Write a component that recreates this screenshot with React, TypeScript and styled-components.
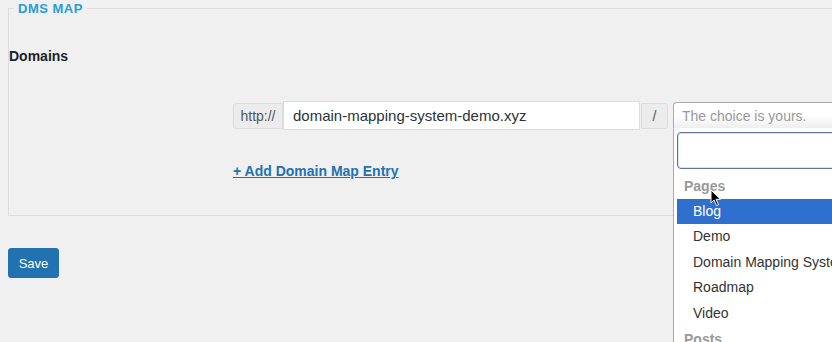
import styled, { createGlobalStyle } from "styled-components";

const GlobalStyle = createGlobalStyle`
  html {
    overflow: hidden;
    background: #f0f0f1;
  }
  body {
    margin: 0;
    padding: 0;
    min-height: 342px;
    font-family: "Liberation Sans", Arial, sans-serif;
    font-size: 14px;
    color: #1d2327;
  }
`;

const Page = styled.div`
  padding: 0 0 0 8px;
  width: 1100px;
`;

const Fieldset = styled.fieldset`
  margin: 0;
  padding: 0 0 34px 0;
  border: 1px solid #dcdcde;
  min-width: 0;
`;

const Legend = styled.legend`
  margin-left: 5px;
  padding: 0 4px;
  font-size: 13px;
  line-height: 17px;
  font-weight: 700;
  letter-spacing: 0.5px;
  color: #2a9bd6;
`;

const Heading = styled.h3`
  margin: 29px 0 0;
  font-size: 14px;
  line-height: 20px;
  font-weight: 700;
  color: #1d2327;
`;

const Entries = styled.div`
  margin: 35px 0 0 224px;
  display: flex;
  flex-direction: column;
`;

const EntryRow = styled.div`
  display: flex;
  align-items: center;
  height: 29px;
`;

const Addon = styled.span<{ $side: "left" | "right" }>`
  display: flex;
  align-items: center;
  justify-content: center;
  box-sizing: border-box;
  height: 26px;
  padding: 0 ${(p) => (p.$side === "left" ? "6px" : "0")};
  width: ${(p) => (p.$side === "left" ? "50px" : "27px")};
  background: #ececec;
  border: 1px solid #dcdcde;
  border-radius: ${(p) => (p.$side === "left" ? "3px 0 0 3px" : "0 3px 3px 0")};
  color: #50575e;
  font-size: 14px;
`;

const DomainInput = styled.input`
  box-sizing: border-box;
  width: 357px;
  height: 29px;
  margin: 0 1px 0 0;
  padding: 0 9px;
  border: 1px solid #dcdcde;
  background: #fff;
  font-family: inherit;
  font-size: 15px;
  color: #2c3338;
  outline: none;
`;

const SelectWrap = styled.div`
  position: relative;
  margin-left: 5px;
  width: 260px;
`;

const SelectBox = styled.div`
  box-sizing: border-box;
  height: 27px;
  padding: 0 8px;
  display: flex;
  align-items: center;
  border: 1px solid #aaa;
  border-bottom-color: #fff;
  border-radius: 4px 4px 0 0;
  background: linear-gradient(#fff 0%, #fff 50%, #eee 100%);
  color: #999;
  font-size: 14px;
`;

const Dropdown = styled.div`
  position: absolute;
  top: 100%;
  left: 0;
  right: 0;
  z-index: 2;
  box-sizing: border-box;
  background: #fff;
  border: 1px solid #aaa;
  border-top: none;
  padding: 3px 3px 0;
  height: 240px;
`;

const Search = styled.input`
  display: block;
  box-sizing: border-box;
  width: 100%;
  height: 37px;
  border: 1px solid #5d7592;
  border-radius: 4px;
  box-shadow: inset 0 0 0 1px #d6e3f1;
  background: #fff;
  outline: none;
`;

const Results = styled.ul`
  list-style: none;
  margin: 4px 0 0;
  padding: 0;
`;

const GroupLabel = styled.li`
  height: 26px;
  line-height: 26px;
  padding-left: 7px;
  font-weight: 700;
  color: #999;
  font-size: 14px;
`;

const Option = styled.li<{ $active?: boolean }>`
  height: 25.4px;
  line-height: 25px;
  padding-left: 16px;
  white-space: nowrap;
  font-size: 14px;
  background: ${(p) => (p.$active ? "#2f6fcd" : "transparent")};
  color: ${(p) => (p.$active ? "#fff" : "#333")};
`;

const AddLink = styled.a`
  margin-top: 31px;
  align-self: flex-start;
  line-height: 20px;
  font-weight: 700;
  font-size: 14px;
  color: #2271b1;
  text-decoration: underline;
`;

const SaveButton = styled.button`
  margin-top: 32px;
  box-sizing: border-box;
  width: 51px;
  height: 30px;
  border: 1px solid #2271b1;
  border-radius: 3px;
  background: #2271b1;
  color: #fff;
  font-family: inherit;
  font-size: 13px;
  padding: 0;
`;

const Cursor = styled.svg`
  position: absolute;
  left: 37px;
  top: 87px;
  z-index: 3;
`;

const pages = ["Blog", "Demo", "Domain Mapping System", "Roadmap", "Video"];

export default function App() {
  return (
    <Page>
      <GlobalStyle />
      <Fieldset>
        <Legend>DMS MAP</Legend>
        <Heading>Domains</Heading>
        <Entries>
          <EntryRow>
            <Addon $side="left">http://</Addon>
            <DomainInput defaultValue="domain-mapping-system-demo.xyz" />
            <Addon $side="right">/</Addon>
            <SelectWrap>
              <SelectBox>The choice is yours.</SelectBox>
              <Dropdown>
                <Search />
                <Results>
                  <GroupLabel>Pages</GroupLabel>
                  {pages.map((p, i) => (
                    <Option key={p} $active={i === 0}>
                      {p}
                    </Option>
                  ))}
                  <GroupLabel>Posts</GroupLabel>
                </Results>
              </Dropdown>
              <Cursor width="12" height="18" viewBox="0 0 12 18">
                <path
                  d="M1 1 L1 14 L4 11 L6.5 16.5 L8.5 15.6 L6 10.3 L10.5 10.3 Z"
                  fill="#000"
                  stroke="#fff"
                  strokeWidth="1"
                />
              </Cursor>
            </SelectWrap>
          </EntryRow>
          <AddLink href="#">+ Add Domain Map Entry</AddLink>
        </Entries>
      </Fieldset>
      <SaveButton>Save</SaveButton>
    </Page>
  );
}
